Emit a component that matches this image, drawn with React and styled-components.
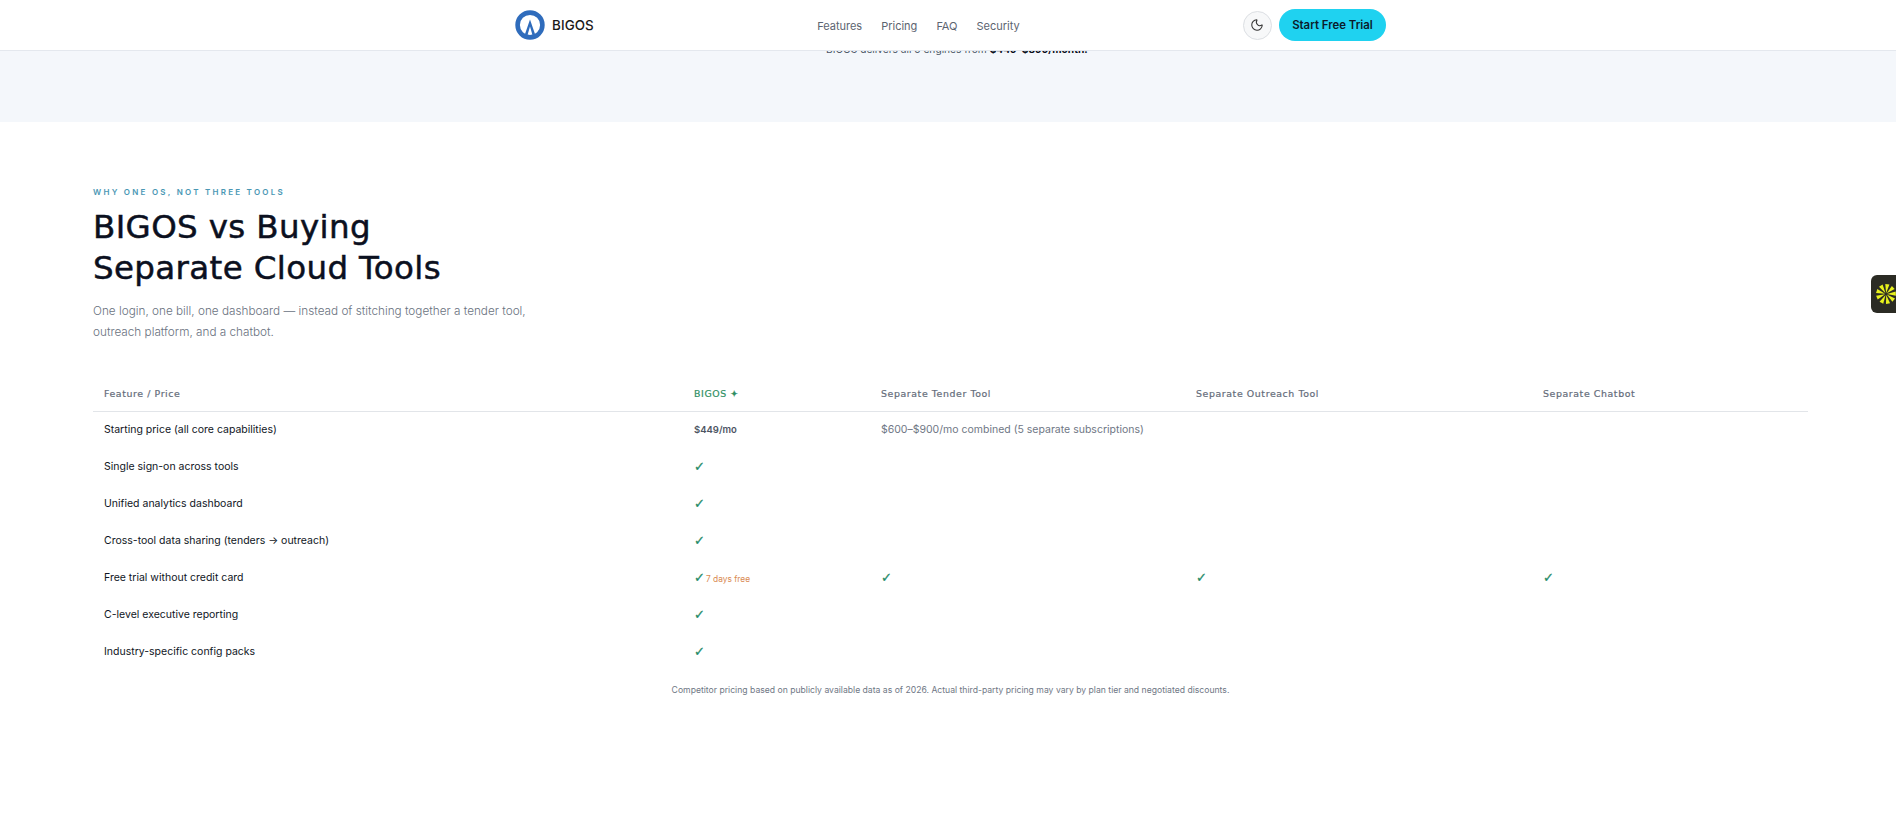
import styled, { createGlobalStyle } from "styled-components";
import { Moon } from "lucide-react";

const GlobalStyle = createGlobalStyle`
  html, body {
    margin: 0;
    background: #fff;
    font-family: "Inter", "Liberation Sans", sans-serif;
    overflow: hidden;
  }
`;

const Page = styled.div`
  position: relative;
  height: 819px;
  overflow: hidden;
`;

const Nav = styled.header`
  position: absolute;
  top: 0;
  left: 0;
  right: 0;
  height: 51px;
  box-sizing: border-box;
  background: #fff;
  border-bottom: 1px solid #e4e8ee;
  display: flex;
  justify-content: center;
`;
const NavInner = styled.div`
  width: 871px;
  margin-left: 5px;
  display: flex;
  align-items: center;
  justify-content: space-between;
`;
const Brand = styled.div`
  display: flex;
  align-items: center;
  gap: 7px;
  color: #1a1a1a;
  font-size: 13.4px;
  font-weight: 500;
  letter-spacing: 0.1px;
`;
const NavLinks = styled.nav`
  display: flex;
  gap: 19px;
`;
const NavLink = styled.a`
  font-size: 11px;
  color: #5c6470;
  margin-top: 1px;
`;
const NavActions = styled.div`
  display: flex;
  align-items: center;
  gap: 7px;
`;
const ThemeButton = styled.button`
  width: 29px;
  height: 29px;
  padding: 0;
  border-radius: 50%;
  border: 1px solid #dcdfe3;
  background: #f7f8f9;
  color: #333;
  display: flex;
  align-items: center;
  justify-content: center;
`;
const TrialButton = styled.button`
  height: 32px;
  width: 107px;
  padding: 0;
  border: 0;
  border-radius: 16px;
  background: #1fd2f0;
  color: #0b1b2b;
  font-family: inherit;
  font-size: 11.4px;
  font-weight: 600;
`;

const Hero = styled.section`
  height: 122px;
  box-sizing: border-box;
  background: #f4f7fb;
  padding: 42px 0 0 826px;
`;
const HeroNote = styled.p`
  margin: 0;
  font-size: 10.2px;
  line-height: 14px;
  color: #4a5565;
  white-space: nowrap;
  strong {
    color: #0a0f1c;
    font-weight: 700;
  }
`;

const Section = styled.section`
  padding: 65px 88px 0 93px;
`;
const Eyebrow = styled.div`
  font-size: 8px;
  line-height: 10px;
  font-weight: 600;
  letter-spacing: 2.25px;
  color: #4a97b4;
  text-transform: uppercase;
`;
const Heading = styled.h2`
  margin: 10px 0 0;
  font-family: "DejaVu Sans", sans-serif;
  font-size: 32.5px;
  line-height: 41px;
  font-weight: 400;
  letter-spacing: 0.36px;
  color: #0b1020;
  -webkit-text-stroke: 0.5px currentColor;
`;
const Lead = styled.p`
  margin: 12px 0 0;
  font-size: 11.75px;
  line-height: 21px;
  font-weight: 300;
  color: #6a7280;
`;

const Table = styled.table`
  width: 1715px;
  margin-top: 33px;
  border-collapse: collapse;
  table-layout: fixed;
`;
const HeadCell = styled.th`
  height: 35px;
  padding: 0 0 0 11px;
  text-align: left;
  font-family: "DejaVu Sans", sans-serif;
  font-size: 9.4px;
  font-weight: 400;
  letter-spacing: 0.6px;
  color: ${(p) => (p.$accent ? "#2f8f63" : "#646c7a")};
  border-bottom: 1px solid #e2e5e9;
  -webkit-text-stroke: 0.2px currentColor;
`;
const Cell = styled.td`
  height: 37px;
  padding: 0 0 2px 11px;
  box-sizing: border-box;
  font-size: 10.5px;
  color: ${(p) => (p.$muted ? "#6f7785" : "#0f1524")};
  white-space: nowrap;
`;
const Price = styled.span`
  color: #4d5563;
  font-weight: 600;
  font-size: 9.5px;
`;
const Check = styled.span`
  color: #1f8a68;
  font-family: "DejaVu Sans", sans-serif;
  font-size: 13px;
  -webkit-text-stroke: 0.3px currentColor;
`;
const Trial = styled.span`
  color: #d98a52;
  font-size: 8.4px;
  margin-left: 1px;
`;
const Footnote = styled.p`
  margin: 13px 0 0;
  width: 1715px;
  text-align: center;
  font-size: 8.65px;
  line-height: 12px;
  color: #6f7785;
`;

const SideTab = styled.div`
  position: absolute;
  right: 0;
  top: 275px;
  width: 25px;
  height: 38px;
  box-sizing: border-box;
  padding-left: 5px;
  background: #2b2b24;
  border-radius: 6px 0 0 6px;
  display: flex;
  align-items: center;
`;

const Logo = () => (
  <svg width="30" height="30" viewBox="0 0 30 30">
    <circle cx="15" cy="15" r="12.4" fill="none" stroke="#2f6cbc" strokeWidth="4.6" />
    <path d="M9.5 25.5 L15 9.5 L20.5 25.5 L17.6 25.5 L15 16.5 L12.4 25.5 Z" fill="#2f6cbc" />
  </svg>
);

const Spark = () => (
  <svg width="20" height="20" viewBox="0 0 20 20">
    {[0, 40, 80, 120, 160, 200, 240, 280, 320].map((deg) => (
      <polygon key={deg} points="10,9 7.9,0.2 12.1,0.2" fill="#e8f21c" transform={`rotate(${deg + 8} 10 10)`} />
    ))}
  </svg>
);

const rows = [
  { name: "Single sign-on across tools" },
  { name: "Unified analytics dashboard" },
  { name: "Cross-tool data sharing (tenders → outreach)" },
  { name: "Free trial without credit card", trial: true },
  { name: "C-level executive reporting" },
  { name: "Industry-specific config packs" },
];

const App = () => {
  return (
    <Page>
      <GlobalStyle />
      <Hero>
        <HeroNote>
          BIGOS delivers all 5 engines from <strong>$449–$899/month.</strong>
        </HeroNote>
      </Hero>
      <Section>
        <Eyebrow>Why one OS, not three tools</Eyebrow>
        <Heading>
          BIGOS vs Buying
          <br />
          Separate Cloud Tools
        </Heading>
        <Lead>
          One login, one bill, one dashboard — instead of stitching together a tender tool,
          <br />
          outreach platform, and a chatbot.
        </Lead>
        <Table>
          <colgroup>
            <col width="590" />
            <col width="187" />
            <col width="315" />
            <col width="347" />
            <col width="276" />
          </colgroup>
          <thead>
            <tr>
              <HeadCell>Feature / Price</HeadCell>
              <HeadCell $accent>BIGOS ✦</HeadCell>
              <HeadCell>Separate Tender Tool</HeadCell>
              <HeadCell>Separate Outreach Tool</HeadCell>
              <HeadCell>Separate Chatbot</HeadCell>
            </tr>
          </thead>
          <tbody>
            <tr>
              <Cell>Starting price (all core capabilities)</Cell>
              <Cell>
                <Price>$449/mo</Price>
              </Cell>
              <Cell $muted>$600–$900/mo combined (5 separate subscriptions)</Cell>
              <Cell />
              <Cell />
            </tr>
            {rows.map((row) => (
              <tr key={row.name}>
                <Cell>{row.name}</Cell>
                <Cell>
                  <Check>✓</Check>
                  {row.trial && <Trial>7 days free</Trial>}
                </Cell>
                <Cell>{row.trial && <Check>✓</Check>}</Cell>
                <Cell>{row.trial && <Check>✓</Check>}</Cell>
                <Cell>{row.trial && <Check>✓</Check>}</Cell>
              </tr>
            ))}
          </tbody>
        </Table>
        <Footnote>
          Competitor pricing based on publicly available data as of 2026. Actual third-party pricing may vary by plan tier and negotiated discounts.
        </Footnote>
      </Section>
      <Nav>
        <NavInner>
          <Brand>
            <Logo />
            BIGOS
          </Brand>
          <NavLinks>
            <NavLink>Features</NavLink>
            <NavLink>Pricing</NavLink>
            <NavLink>FAQ</NavLink>
            <NavLink>Security</NavLink>
          </NavLinks>
          <NavActions>
            <ThemeButton>
              <Moon size={14} strokeWidth={1.8} />
            </ThemeButton>
            <TrialButton>Start Free Trial</TrialButton>
          </NavActions>
        </NavInner>
      </Nav>
      <SideTab>
        <Spark />
      </SideTab>
    </Page>
  );
};

export default App;
